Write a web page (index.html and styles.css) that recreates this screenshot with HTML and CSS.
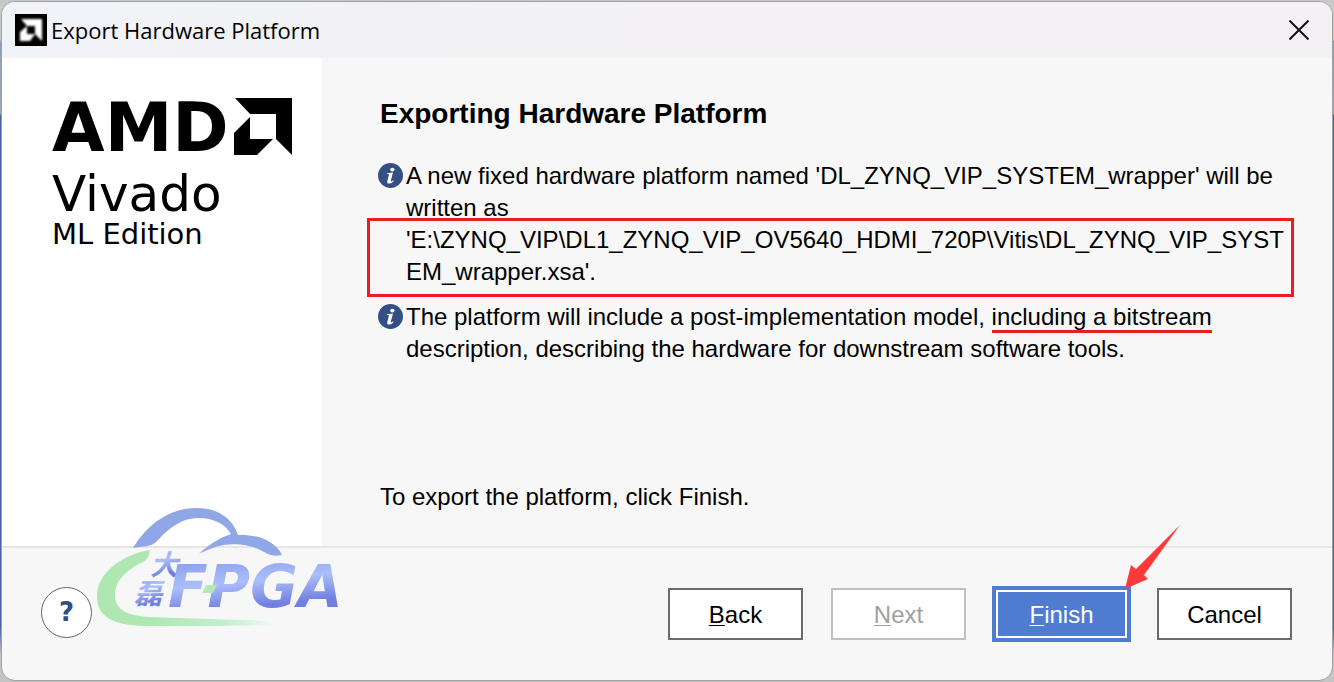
FILE: index.html
```
<!DOCTYPE html>
<html lang="en">
<head>
    <meta charset="utf-8">
    <title>Export Hardware Platform</title>
    <link rel="stylesheet" href="styles.css">
</head>
<body>
    <div class="window">
        <header class="titlebar">
            <svg class="app-icon" viewBox="0 0 32 32" aria-hidden="true">
                <defs>
                    <filter id="glow"><feGaussianBlur stdDeviation="0.9"/></filter>
                </defs>
                <rect width="32" height="32"/>
                <g fill="#fff" filter="url(#glow)">
                    <path d="M6 5H27V27L20 20V12H12Z"/>
                    <path d="M12 12V20H20L15 27H5V18Z"/>
                </g>
            </svg>
            <span class="title">Export Hardware Platform</span>
            <button class="close" aria-label="Close">
                <svg viewBox="0 0 20 20"><path d="M0.5 0.5L19.5 19.5M19.5 0.5L0.5 19.5"/></svg>
            </button>
        </header>

        <div class="main">
            <aside class="sidebar">
                <div class="brand">
                    <span class="brand-name">AMD</span>
                    <svg class="brand-mark" viewBox="0 0 58 58" aria-hidden="true">
                        <path d="M1 0H58V57L42 41V16H16Z"/>
                        <path d="M16 19V41H39L23 57H0V35Z"/>
                    </svg>
                </div>
                <div class="product">Vivado</div>
                <div class="edition">ML Edition</div>
            </aside>

            <main class="content">
                <h1>Exporting Hardware Platform</h1>
                <div class="message">
                    <svg class="info" viewBox="0 0 25 25" aria-hidden="true">
                        <circle cx="12.5" cy="12.5" r="12.5"/>
                        <ellipse class="mark" cx="14.4" cy="6.6" rx="2.1" ry="1.9"/>
                        <path class="mark" d="M9 10.2L15 9.6L12.9 17.2Q12.6 18.6 13.4 18.4Q14.1 18.2 15 17.2L15.7 17.9Q13.7 20.6 11.3 20.6Q8.7 20.5 9.3 18L11 11.6Q11.1 11 10.4 11H8.8Z"/>
                    </svg>
                    <p>A new fixed hardware platform named 'DL_ZYNQ_VIP_SYSTEM_wrapper' will be written as
                        <span class="path">'E:\ZYNQ_VIP\DL1_ZYNQ_VIP_OV5640_HDMI_720P\Vitis\DL_ZYNQ_VIP_SYST<wbr>EM_wrapper.xsa'.</span></p>
                </div>
                <div class="message">
                    <svg class="info" viewBox="0 0 25 25" aria-hidden="true">
                        <circle cx="12.5" cy="12.5" r="12.5"/>
                        <ellipse class="mark" cx="14.4" cy="6.6" rx="2.1" ry="1.9"/>
                        <path class="mark" d="M9 10.2L15 9.6L12.9 17.2Q12.6 18.6 13.4 18.4Q14.1 18.2 15 17.2L15.7 17.9Q13.7 20.6 11.3 20.6Q8.7 20.5 9.3 18L11 11.6Q11.1 11 10.4 11H8.8Z"/>
                    </svg>
                    <p>The platform will include a post-implementation model, <span class="marked">including a bitstream</span> description, describing the hardware for downstream software tools.</p>
                </div>
                <p class="hint">To export the platform, click Finish.</p>
            </main>
        </div>

        <footer class="footer">
            <button class="help" aria-label="Help">?</button>
            <div class="actions">
                <button class="btn"><u>B</u>ack</button>
                <button class="btn" disabled><u>N</u>ext</button>
                <div class="finish">
                    <button class="btn primary"><u>F</u>inish</button>
                    <svg class="arrow" viewBox="0 0 56 64" aria-hidden="true">
                        <path d="M55 0L19 50L23 54L0 64L6 40L11 44Z"/>
                    </svg>
                </div>
                <button class="btn">Cancel</button>
            </div>
        </footer>

        <!-- watermark -->
        <svg class="watermark" viewBox="0 0 280 130">
            <defs>
                <linearGradient id="blue" x1="0" y1="0" x2="0.25" y2="1">
                    <stop offset="0.2" stop-color="#8fa5ee"/>
                    <stop offset="0.5" stop-color="#abbffb"/>
                    <stop offset="0.85" stop-color="#7180df"/>
                </linearGradient>
                <linearGradient id="green" x1="0" y1="0" x2="1" y2="0">
                    <stop offset="0.3" stop-color="#aee7b0"/>
                    <stop offset="0.7" stop-color="#c3efcf"/>
                    <stop offset="1" stop-color="#f7f7f7"/>
                </linearGradient>
            </defs>
            <path fill="#8fa7e7" d="M45 48C60 23 83 8 108 8C130 8 144 18 150 35C170 34 187 41 194 55Q186 57 180 54C161 42 136 40 111 54C120 45 131 38 143 34C137 24 126 18 110 18C95 18 82 27 70 40C65 46 60 46 45 48Z"/>
            <path fill="url(#green)" d="M62 50C32 55 9 74 9 96C9 119 28 126 62 126C102 126 147 126 191 125C182 121 172 120 152 120L62 117C38 116 27 109 27 95C27 80 40 69 55 62Q61 59 62 50Z"/>
            <g class="watermark-cn" fill="url(#blue)">
                <text x="62" y="75">大</text>
                <text x="46" y="104">磊</text>
            </g>
            <text class="watermark-en" x="80" y="107" fill="url(#blue)">FPGA</text>
            <path fill="#b3e8b8" d="M118 85H129L125 93H114Z"/>
        </svg>
    </div>
</body>
</html>
```
FILE: styles.css
```
* {
    box-sizing: border-box;
}
body {
    margin: 0;
    padding: 1px;
    background: linear-gradient(#c8c8c8 40px, #8fa0b8 41px, #a0a8b4 114px, #4565a3 115px, #4565a3 92%, #c4c4c4 96%);
    color: #000;
    font-family: "Liberation Sans", Arial, sans-serif;
    font-size: 24px;
    line-height: 32px;
}
h1, p {
    margin: 0;
}
button {
    padding: 0;
    font: inherit;
    color: inherit;
}
.window {
    position: relative;
    display: flex;
    flex-direction: column;
    min-height: calc(100vh - 2px);
    border: 1px solid #a0a0a0;
    border-radius: 14px;
    background: #f7f7f7;
    overflow: hidden;
}

/* title bar */
.titlebar {
    display: flex;
    align-items: center;
    gap: 4px;
    height: 56px;
    padding: 0 23px 0 13px;
    background: linear-gradient(90deg, #f0f3f8, #f3f1f4 50%, #f4f1f4);
}
.app-icon {
    width: 32px;
    height: 32px;
}
.title {
    flex: 1;
    font-family: "Open Sans", sans-serif;
    font-size: 22px;
}
.close {
    display: flex;
    border: 0;
    background: none;
}
.close svg {
    width: 20px;
    height: 20px;
    fill: none;
    stroke: #111;
    stroke-width: 2;
}

/* body */
.main {
    display: flex;
    flex: 1;
}
.sidebar {
    width: 320px;
    padding: 40px 30px 0 50px;
    background: #fff;
    font-family: "DejaVu Sans", sans-serif;
}
.brand {
    display: flex;
    justify-content: space-between;
    height: 66px;
}
.brand-name {
    font-size: 68px;
    font-weight: bold;
    line-height: 60px;
}
.brand-mark {
    flex: none;
    width: 58px;
    height: 58px;
}
.product {
    font-size: 50px;
    line-height: 60px;
}
.edition {
    font-size: 29px;
    line-height: 20px;
}
.content {
    flex: 1;
    padding: 40px 36px 0 56px;
}
h1 {
    margin: 0 0 30px 2px;
    font-size: 28px;
}
.message {
    display: flex;
    gap: 3px;
    margin-bottom: 13px;
}
.message p {
    flex: 1;
}
.info {
    flex: none;
    width: 25px;
    height: 25px;
    margin-top: 3px;
    fill: #344f84;
}
.info .mark {
    fill: #fff;
}
.path {
    position: relative;
    display: block;
}
.path::after {
    content: "";
    position: absolute;
    inset: -6px 2px -9px -39px;
    border: 3px solid #ed1c24;
}
.marked {
    border-bottom: 3px solid #ed1c24;
}
.hint {
    margin: 116px 0 0 2px;
}

/* footer */
.footer {
    display: flex;
    align-items: center;
    justify-content: space-between;
    height: 134px;
    padding: 0 40px 0 39px;
    border-top: 2px solid #e6e6e6;
}
.help {
    width: 51px;
    height: 51px;
    margin-bottom: 4px;
    border: 1px solid #666;
    border-radius: 50%;
    background: #fff;
    color: #344f84;
    font-family: "DejaVu Sans", sans-serif;
    font-size: 26px;
    font-weight: bold;
}
.actions {
    display: flex;
    align-items: center;
    gap: 28px;
}
.btn {
    width: 135px;
    height: 52px;
    padding-top: 2px;
    border: 2px solid #6b6b6b;
    background: #fff;
}
.btn u {
    text-decoration-thickness: 1px;
    text-underline-offset: 2px;
}
.btn:disabled {
    border-color: #bfbfbf;
    color: #a0a0a0;
}
.finish {
    position: relative;
    margin: 0 -2px;
}
.btn.primary {
    display: block;
    width: 139px;
    height: 56px;
    border: 4px solid #4f7cd1;
    background: #4f7cd1;
    box-shadow: inset 0 0 0 2px #fff;
    color: #fff;
}
.arrow {
    position: absolute;
    right: -50px;
    top: -61px;
    width: 56px;
    height: 64px;
    fill: #fc3a3a;
}

.watermark {
    position: absolute;
    left: 86px;
    bottom: 50px;
    width: 280px;
    height: 130px;
    pointer-events: none;
}
.watermark-cn {
    font-family: "Noto Sans CJK SC", sans-serif;
    font-size: 28px;
    font-weight: bold;
    font-style: italic;
}
.watermark-en {
    font-family: "DejaVu Sans", sans-serif;
    font-size: 58px;
    font-weight: bold;
    font-style: italic;
}
```
